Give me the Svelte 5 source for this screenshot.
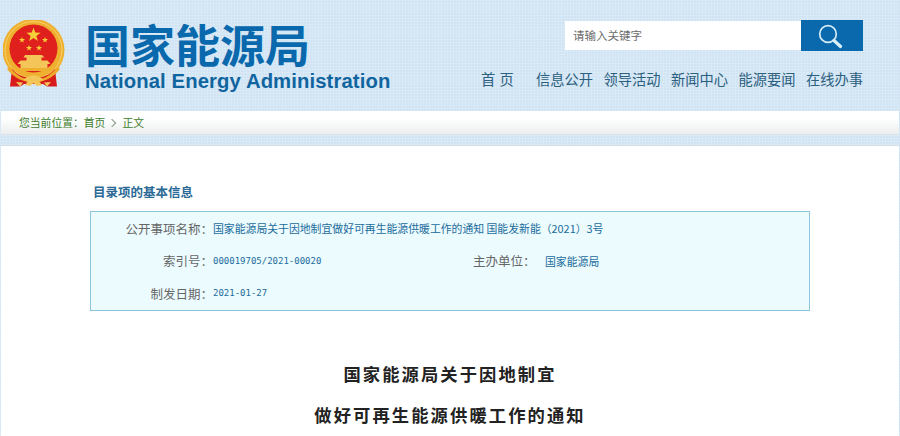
<script>
  const nav = ['信息公开', '领导活动', '新闻中心', '能源要闻', '在线办事'];
  const star = 'M0 -1 L.235 -.324 .951 -.309 .38 .124 .588 .809 0 .4 -.588 .809 -.38 .124 -.951 -.309 -.235 -.324Z';
  const stars = [
    [30.5, 15, 7.5],
    [19, 20, 3.2],
    [42, 20, 3.2],
    [26, 28, 3.2],
    [36, 28, 3.2]
  ];
</script>

<div class="page">
  <header class="top">
    <svg class="emblem" viewBox="0 0 64 68" aria-hidden="true">
      <circle cx="30.500" cy="30" r="31" fill="#eeb02e"/>
      <circle cx="30.500" cy="30" r="28.500" fill="none" stroke="#f8d06a" stroke-width="1"/>
      <circle cx="30.500" cy="28.500" r="24" fill="#e0201c"/>
      {#each stars as s}
        <path d={star} fill="#f6cf3a" transform="translate({s[0]} {s[1]}) scale({s[2]})"/>
      {/each}
      <path d="M22 35 h17 l2.500 2.500 h-3 v3 h6 l3 3.500 h-3 v4 h-27 v-4 h-3 l3 -3.500 h6 v-3 h-3z" fill="#f4c65a"/>
      <path d="M11 48 h39 v3 h-39z" fill="#eeb02e"/>
      <path d="M9 49 L7 66.500 H17 L21 64 H40 L44 66.500 H54 L52 49 C47 55 40 58 30.500 58 C21 58 14 55 9 49 Z" fill="#d81c1c"/>
      <path d="M7 47 C13 56 22 60 30.500 60 C39 60 48 56 54 47 L57 49 C50 58 40 62.500 30.500 62.500 C21 62.500 11 58 4 49 Z" fill="#eeaa28"/>
      <path d="M24 57 q6.500 -3.500 13 0 l4 3 -5 1 3 4 -5 1 -3.500 -3 -3.500 3 -5 -1 3 -4 -5 -1z" fill="#f4c65a"/>
      <path d="M13 62 l7 .500 -3 4z M48 62 l-7 .500 3 4z" fill="#f4c65a"/>
    </svg>
    <div class="brand">
      <div class="cn">国家能源局</div>
      <div class="en">National Energy Administration</div>
    </div>
    <div class="side">
      <form class="search">
        <span class="field">请输入关键字</span>
        <button type="button" class="go" aria-label="搜索">
          <svg viewBox="0 0 62 31" width="62" height="31" aria-hidden="true">
            <circle cx="27" cy="14" r="8.300" fill="none" stroke="#d4ecf6" stroke-width="1.700"/>
            <path d="M33 20.500 L39.500 26.500" stroke="#d9f0f8" stroke-width="3.200" stroke-linecap="round"/>
          </svg>
        </button>
      </form>
      <nav class="menu">
        <a class="home" href="#a">首 页</a>
        {#each nav as item}<a href="#a">{item}</a>{/each}
      </nav>
    </div>
  </header>

  <div class="crumb">
    <span>您当前位置：</span><a href="#a">首页</a><i class="sep"></i><a href="#a">正文</a>
  </div>
  <div class="strip"></div>

  <main class="main">
    <h3 class="info-title">目录项的基本信息</h3>
    <div class="info">
      <div class="row">
        <span class="k">公开事项名称：</span>
        <span class="v">国家能源局关于因地制宜做好可再生能源供暖工作的通知 国能发新能（2021）3号</span>
      </div>
      <div class="row">
        <span class="k">索引号：</span>
        <span class="v mono wide">000019705/2021-00020</span>
        <span class="k2">主办单位：</span>
        <span class="v">国家能源局</span>
      </div>
      <div class="row">
        <span class="k">制发日期：</span>
        <span class="v mono">2021-01-27</span>
      </div>
    </div>
    <h1 class="doc">国家能源局关于因地制宜<br />做好可再生能源供暖工作的通知</h1>
  </main>
</div>

<style>
  :global(body) {
    margin: 0;
    background: #fff;
  }
  .page {
    width: 900px;
    height: 436px;
    overflow: hidden;
    font-family: "Noto Sans CJK SC", "Liberation Sans", sans-serif;
    background-color: #d0e4f4;
    background-image:
      repeating-linear-gradient(0deg, rgba(255, 255, 255, 0.16) 0 1px, transparent 1px 3px),
      repeating-linear-gradient(90deg, rgba(255, 255, 255, 0.16) 0 1px, transparent 1px 3px);
  }
  .top {
    height: 111px;
    display: flex;
    box-sizing: border-box;
    padding: 20px 37px 0 3px;
  }
  .emblem {
    width: 64px;
    height: 68px;
    flex: none;
  }
  .brand {
    margin-left: 18px;
    color: #0a68ad;
  }
  .cn {
    font-size: 45px;
    line-height: 48px;
    font-weight: 700;
  }
  .en {
    font-family: "Liberation Sans", sans-serif;
    font-size: 20.300px;
    letter-spacing: 0.1px;
    line-height: 24px;
    font-weight: 700;
    margin-top: 1px;
    color: #10659f;
    white-space: nowrap;
  }
  .side {
    margin-left: auto;
    width: 382px;
    display: flex;
    flex-direction: column;
    align-items: flex-end;
  }
  .search {
    display: flex;
    margin: 0;
    height: 31px;
    align-items: center;
  }
  .field {
    box-sizing: border-box;
    width: 236px;
    height: 29px;
    background: #fff;
    padding-left: 8px;
    font-size: 11.500px;
    line-height: 28px;
    color: #6d6d6d;
  }
  .go {
    width: 62px;
    height: 31px;
    padding: 0;
    border: 0;
    background: #0a68ad;
    display: block;
  }
  .go svg {
    display: block;
  }
  .menu {
    width: 100%;
    box-sizing: border-box;
    margin-top: 18px;
    display: flex;
    font-size: 14.250px;
    line-height: 20px;
    white-space: nowrap;
  }
  .menu a {
    color: #2c6080;
    text-decoration: none;
    margin-left: 10.500px;
  }
  .menu a.home {
    margin-left: 0;
    margin-right: 11.500px;
    width: 33px;
    white-space: pre;
    word-spacing: 1px;
  }
  .crumb {
    margin-left: 1px;
    margin-right: 1px;
    height: 24px;
    box-sizing: border-box;
    padding-left: 18px;
    background: linear-gradient(#fff 30%, #ecefef);
    border-bottom: 1px solid #dfe3e4;
    font-size: 10.800px;
    line-height: 23px;
    color: #3f7d2c;
    display: flex;
    align-items: center;
  }
  .crumb span {
    margin-right: 0;
  }
  .crumb a {
    color: #3f7d2c;
    text-decoration: none;
  }
  .sep {
    width: 5px;
    height: 5px;
    border-top: 1px solid #8a9a8a;
    border-right: 1px solid #8a9a8a;
    transform: rotate(45deg);
    margin: 0 7px 0 4px;
  }
  .strip {
    height: 10px;
    border-bottom: 1px solid #d3dee6;
  }
  .main {
    margin-left: 1px;
    margin-right: 1px;
    background: #fff;
    height: 290px;
    padding: 37px 89px 0;
    box-sizing: border-box;
  }
  .info-title {
    margin: 0 0 10px 3px;
    font-size: 12.500px;
    line-height: 18px;
    font-weight: 700;
    color: #2b6a96;
  }
  .info {
    height: 100px;
    box-sizing: border-box;
    border: 1px solid #8cc4dc;
    background: #ecfbfe;
  }
  .row {
    display: flex;
    align-items: center;
    height: 32.500px;
    white-space: nowrap;
  }
  .k {
    width: 122px;
    text-align: right;
    font-size: 12.500px;
    color: #666;
    flex: none;
  }
  .k2 {
    width: 72px;
    font-size: 12.500px;
    color: #666;
    flex: none;
  }
  .v {
    font-size: 10.850px;
    color: #1b6c9c;
  }
  .mono {
    font-family: "DejaVu Sans Mono", monospace;
    font-size: 9px;
    color: #1b6c9c;
  }
  .wide {
    width: 260px;
    flex: none;
  }
  .doc {
    margin: 44px 0 0;
    text-align: center;
    font-family: "Liberation Serif", "Noto Sans CJK SC", serif;
    font-size: 17.300px;
    letter-spacing: 2.100px;
    line-height: 41px;
    font-weight: 700;
    color: #222;
  }
</style>
